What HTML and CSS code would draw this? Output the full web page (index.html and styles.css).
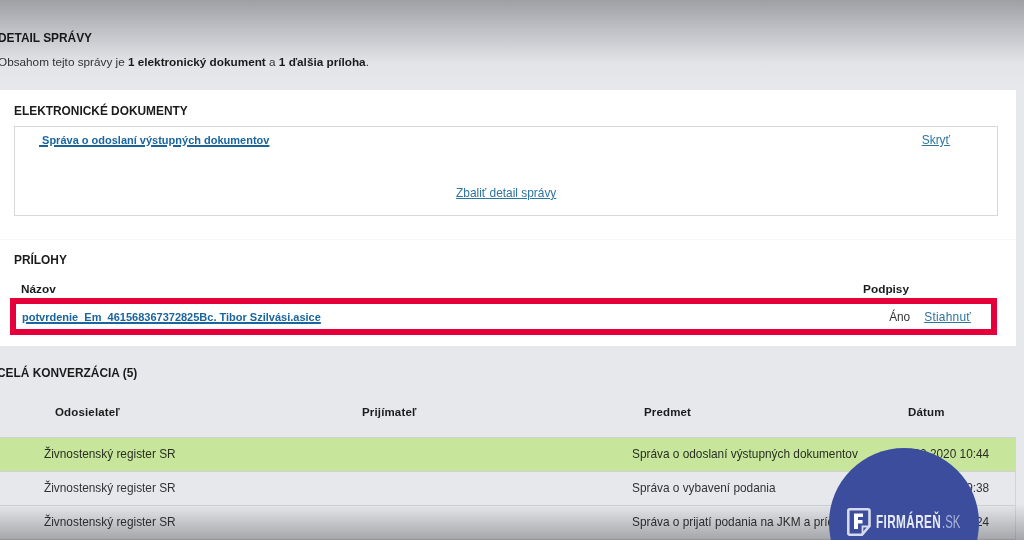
FILE: index.html
```html
<!DOCTYPE html>
<html lang="sk">
<head>
<meta charset="utf-8">
<title>Detail správy</title>
<link rel="stylesheet" href="styles.css">
</head>
<body>
<div class="page">
  <section class="intro">
    <h2 class="title">DETAIL SPRÁVY</h2>
    <p class="lead">Obsahom tejto správy je <b>1 elektronický dokument</b> a <b>1 ďalšia príloha</b>.</p>
  </section>

  <section class="panel">
    <div class="docs">
      <h3 class="title">ELEKTRONICKÉ DOKUMENTY</h3>
      <div class="docbox">
        <div class="docrow">
          <a class="strong-link doclink" href="#"> Správa o odoslaní výstupných dokumentov</a>
          <a class="link" href="#">Skryť</a>
        </div>
        <div class="collapse"><a class="link" href="#">Zbaliť detail správy</a></div>
      </div>
    </div>
    <div class="attach">
      <h3 class="title">PRÍLOHY</h3>
      <div class="attach-head">
        <span>Názov</span>
        <span class="podpisy">Podpisy</span>
      </div>
      <div class="attach-row">
        <a class="strong-link" href="#">potvrdenie_Em_461568367372825Bc. Tibor Szilvási.asice</a>
        <span class="ano">Áno</span>
        <a class="link wide" href="#">Stiahnuť</a>
      </div>
    </div>
  </section>

  <section class="conv">
    <h2 class="title">CELÁ KONVERZÁCIA (5)</h2>
    <div class="conv-head">
      <span>Odosielateľ</span><span>Prijímateľ</span><span>Predmet</span><span>Dátum</span>
    </div>
    <div class="conv-table">
      <div class="row active"><span>Živnostenský register SR</span><span></span><span>Správa o odoslaní výstupných dokumentov</span><span class="date">18.03.2020 10:44</span></div>
      <div class="row"><span>Živnostenský register SR</span><span></span><span>Správa o vybavení podania</span><span class="date">18.03.2020 09:38</span></div>
      <div class="row"><span>Živnostenský register SR</span><span></span><span>Správa o prijatí podania na JKM a príd</span><span class="date">18.03.2020 09:24</span></div>
    </div>
  </section>
</div>

<div class="shade-top"></div>
<div class="shade-bottom"></div>

<div class="badge">
  <div class="brand">
    <svg class="brand-icon" viewBox="0 0 24 28" width="24" height="28" aria-hidden="true">
      <path d="M2.5 1.3H21a1.5 1.5 0 0 1 1.5 1.5V18L15 26.7H2.5A1.2 1.2 0 0 1 1.3 25.5V2.5A1.2 1.2 0 0 1 2.5 1.3Z" fill="none" stroke="#d5daec" stroke-width="2.6"/>
      <path d="M7 5.5H16V9H11V12H15.5V15.5H11V21H7Z" fill="#fff"/>
      <path d="M15.5 26V18.5H22" fill="none" stroke="#d5daec" stroke-width="1.8"/>
    </svg>
    <span class="brand-name">FIRMÁREŇ</span><span class="brand-sk">.SK</span>
  </div>
</div>
</body>
</html>
```
FILE: styles.css
```css
* { box-sizing: border-box; }
html, body { margin: 0; height: 540px; overflow: hidden; }
body {
  position: relative;
  width: 1024px;
  background: #e6e8ec;
  font-family: "Liberation Sans", Arial, sans-serif;
  font-size: 11.85px;
  color: #2b2b2b;
}
.page { width: 1024px; height: 540px; overflow: hidden; filter: blur(0.45px); }
a { color: #1f6ca3; }
.title { margin: 0; font-size: 11.9px; font-weight: 700; color: #1b1b1b; line-height: 14px; }

.intro { height: 90px; padding: 31px 0 0; margin-left: -2px; }
.lead { margin: 10px 0 0; line-height: 14px; font-size: 11.75px; color: #333; }
.lead b { color: #1b1b1b; }

.panel { width: 1016px; height: 256px; background: #fff; }
.docs { height: 150px; padding: 14px 18px 0 14px; border-bottom: 1px solid #f7f7f7; }
.docbox { margin-top: 8px; height: 90px; border: 1px solid #d6d8da; padding: 6px 0 0 24px; display: flex; flex-direction: column; }
.docrow { display: flex; justify-content: space-between; padding-right: 47px; line-height: 14px; }
.strong-link { font-weight: 700; color: #1a659f; font-size: 11px; text-decoration-thickness: 1.5px; }
.doclink { white-space: pre; }
.link { color: #2d749f; font-size: 11.9px; }
.link.wide { letter-spacing: .25px; }
.collapse { margin: 39px 0 0 417px; line-height: 14px; }

.attach { padding: 13px 19px 0 10px; }
.attach .title { margin-left: 4px; }
.attach-head { display: flex; font-weight: 700; font-size: 11.8px; color: #1b1b1b; margin-top: 15px; padding-left: 11px; line-height: 14px; height: 16px; }
.podpisy { margin-left: auto; margin-right: 88px; }
.attach-row { height: 37px; border: 6px solid #e5003a; display: flex; align-items: center; padding: 0 20px 0 6px; }
.ano { margin-left: auto; margin-right: 14px; color: #333; }

.conv { width: 1016px; }
.conv > .title { margin: 20px 0 0 -3px; }
.conv-head { display: grid; grid-template-columns: 307px 282px 264px 1fr; padding-left: 55px; margin-top: 25px; height: 32px; line-height: 14px; font-weight: 700; font-size: 11.5px; color: #1b1b1b; letter-spacing: .15px; }
.conv-table { border-top: 1px solid #cfd1d4; border-right: 1px solid #d2d4d7; }
.row { display: grid; grid-template-columns: 294px 294px 265px 1fr; padding: 0 0 2px 44px; height: 34px; align-items: center; border-bottom: 1px solid #cfd1d4; color: #333; }
.row.active { background: #c7e69c; color: #2a2f22; }
.date { white-space: nowrap; }

.shade-top { position: absolute; left: 0; top: 0; width: 100%; height: 90px; background: linear-gradient(#b0b0b2, #d6d6d8 35%, #fbfbfb 70%, #fff); mix-blend-mode: multiply; pointer-events: none; }
.shade-bottom { position: absolute; left: 0; bottom: 0; width: 100%; height: 36px; background: linear-gradient(#fff, #b6b6b8); mix-blend-mode: multiply; pointer-events: none; }

.badge { position: absolute; left: 829px; top: 448px; width: 150px; height: 150px; border-radius: 50%; background: #3b4d9c; }
.brand { position: absolute; left: 18px; top: 60px; display: flex; align-items: center; white-space: nowrap; font-size: 19px; color: #e7eaf5; }
.brand-icon { margin-right: 5px; flex: none; }
.brand-name { font-weight: 700; display: inline-block; width: 66px; letter-spacing: .6px; transform: scaleX(.62); transform-origin: left; }
.brand-sk { color: #a9b3d8; display: inline-block; transform: scaleX(.6); transform-origin: left; }
```
